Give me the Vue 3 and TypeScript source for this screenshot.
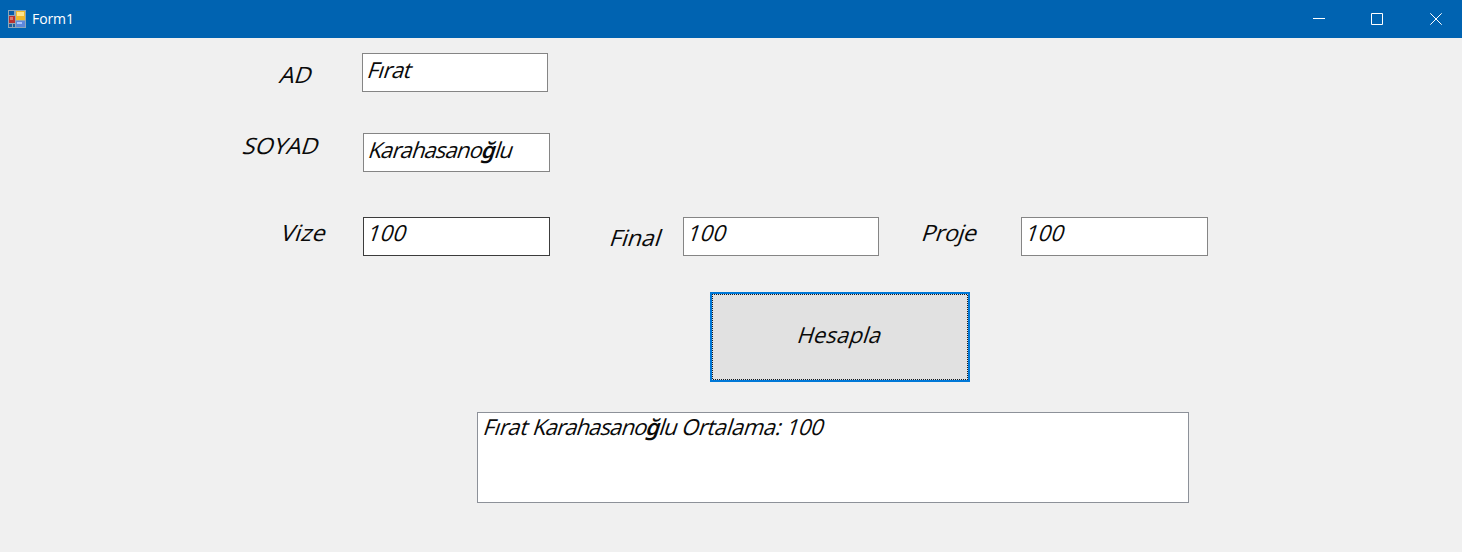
<script setup lang="ts">
import { ref } from 'vue'

const name = ref('Fırat')
const surnameStart = ref('Karahasano')
const grade = ref('100')
</script>

<template>
  <main class="window">
    <header class="titlebar">
      <svg class="app-icon" width="18" height="18" viewBox="0 0 18 18" shape-rendering="crispEdges">
        <rect width="18" height="18" fill="#8ea6b8" />
        <rect x="1" y="1" width="5" height="4" fill="#075ba8" />
        <rect x="1" y="14" width="3" height="3" fill="#1f5f9c" />
        <rect x="5" y="14" width="2" height="3" fill="#1f5f9c" />
        <rect x="1" y="6" width="6" height="7" fill="#b83232" />
        <rect x="2" y="7" width="3" height="3" fill="#e0776c" />
        <rect x="8" y="1" width="9" height="9" fill="#f0b92a" />
        <rect x="9" y="2" width="7" height="4" fill="#ffe48a" />
        <rect x="8" y="11" width="9" height="6" fill="#5d88dc" />
        <rect x="9" y="12" width="5" height="2" fill="#a9c5ff" />
      </svg>
      <span class="title">Form1</span>
      <div class="controls">
        <svg width="12" height="12" viewBox="0 0 12 12"><path d="M0 5.5H12" /></svg>
        <svg width="12" height="12" viewBox="0 0 12 12"><path d="M.5 .5H11.5V11.5H.5Z" /></svg>
        <svg width="12" height="12" viewBox="0 0 12 12"><path d="M.3 .3L11.7 11.7M11.7 .3L.3 11.7" /></svg>
      </div>
    </header>
    <section class="form">
      <div class="row first">
        <label class="ad"><span class="ink">AD</span></label>
        <div class="field"><span class="ink">{{ name }}</span></div>
      </div>
      <div class="row second">
        <label class="soyad"><span class="ink">SOYAD</span></label>
        <div class="field"><span class="ink"><span class="surname">{{ surnameStart }}<b>ğ</b>lu</span></span></div>
      </div>
      <div class="row third">
        <label class="vize"><span class="ink">Vize</span></label>
        <div class="field hovered"><span class="ink num">{{ grade }}</span></div>
        <label class="final"><span class="ink">Final</span></label>
        <div class="field wide"><span class="ink num">{{ grade }}</span></div>
        <label class="proje"><span class="ink">Proje</span></label>
        <div class="field"><span class="ink num">{{ grade }}</span></div>
      </div>
      <button class="calculate" type="button">
        <svg class="focus" width="256" height="86">
          <rect class="gap" x=".5" y=".5" width="255" height="85" />
          <rect class="dots" x=".5" y=".5" width="255" height="85" />
        </svg>
        <span class="ink">Hesapla</span>
      </button>
      <div class="output"><span class="ink">{{ name }} <span class="surname">{{ surnameStart }}<b>ğ</b>lu</span> Ortalama: {{ grade }}</span></div>
    </section>
  </main>
</template>

<style>
html, body { margin: 0; background: #f0f0f0; }
</style>

<style scoped>
.window { width: 1462px; height: 552px; overflow: hidden; background: #f0f0f0; font-family: "Open Sans", "Noto Sans", sans-serif; }
.titlebar { height: 38px; display: flex; align-items: center; background: #0063b1; color: #fff; }
.app-icon { margin: 0 6px 1px 8px; }
.title { font-size: 14px; line-height: 20px; letter-spacing: -.1px; }
.controls { display: flex; gap: 46px; margin: 0 20px 0 auto; }
.controls svg { fill: none; stroke: #fff; stroke-width: 1; }
.controls svg:not(:last-child) { position: relative; left: -1px; }
.form { display: flex; flex-direction: column; }
.row { display: flex; align-items: flex-start; height: 39px; }
.first { margin-top: 15px; }
.second { margin-top: 41px; }
.third { margin-top: 45px; }
.field { box-sizing: border-box; width: 187px; height: 39px; flex: none; padding-left: 3px; border: 1px solid #858585; background: #fff; }
.first .field { width: 186px; }
.field.wide { width: 196px; }
.field.hovered { border-color: #3c3c3c; }
.ink { display: block; width: max-content; font-size: 22px; line-height: 30px; color: #0a0a0a; white-space: pre; transform: skewX(-18deg); transform-origin: 0 24px; letter-spacing: -.5px; }
.ink b { font-family: "Noto Sans", sans-serif; font-weight: 600; }
.surname { letter-spacing: -.88px; }
.num { letter-spacing: .3px; margin: -1px 0 0 -1px; }
label { flex: none; }
label .ink { font-size: 22.5px; letter-spacing: -.1px; transform: skewX(-18deg) scaleX(1.04); }
.ad { width: 84px; margin: 7px 0 0 278px; }
.soyad { width: 122px; margin: -2px 0 0 241px; }
.vize { width: 83px; margin: 1px 0 0 280px; }
.vize .ink { margin-left: -1px; letter-spacing: .3px; }
.final { width: 75px; margin: 6px 0 0 58px; }
.proje { width: 101px; margin: 1px 0 0 41px; }
.proje .ink { letter-spacing: -.4px; }
.calculate { position: relative; box-sizing: border-box; width: 260px; height: 90px; margin: 36px 0 0 710px; padding: 0 5px 6px 0; border: 3px solid #0078d7; background: #e1e1e1; font-family: inherit; display: flex; align-items: center; justify-content: center; }
.calculate .ink { letter-spacing: .15px; }
.focus { position: absolute; left: -1px; top: -1px; fill: none; shape-rendering: crispEdges; }
.gap { stroke: #d6dce2; }
.dots { stroke: #1a1a1a; stroke-dasharray: 1 1; stroke-dashoffset: .5; }
.output { box-sizing: border-box; width: 712px; height: 91px; margin: 30px 0 0 477px; padding: 0 4px; border: 1px solid #8d9199; background: #fff; }
.output .ink { margin-top: -2px; letter-spacing: -.35px; }
</style>
